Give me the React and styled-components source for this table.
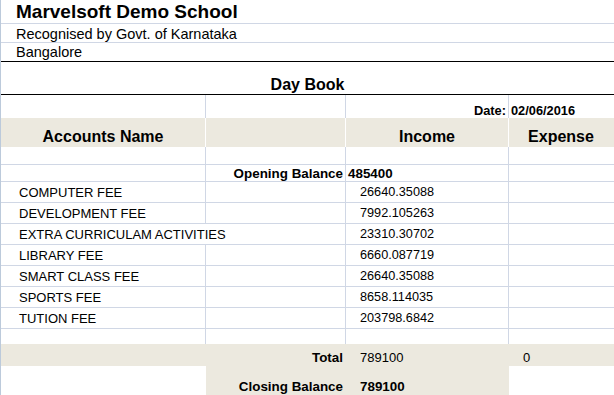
import React from 'react';
import styled, { createGlobalStyle } from 'styled-components';

const GRID = '#d0d7e5';
const BEIGE = '#ece9df';

const GlobalStyle = createGlobalStyle`
  * {
    box-sizing: border-box;
  }
  body {
    margin: 0;
    background: #fff;
    color: #000;
    font-family: "Liberation Sans", Arial, sans-serif;
  }
`;

const Sheet = styled.div`
  min-height: 100vh;
  border-left: 1px solid #bccadb;
  overflow: hidden;
`;

// school name / address lines above the report
const BannerRow = styled.div`
  height: ${(p) => p.$h}px;
  display: flex;
  align-items: flex-end;
  padding: 0 0 ${(p) => p.$pb}px 15px;
  border-bottom: 1px solid ${(p) => (p.$dark ? '#000' : GRID)};
  font-size: ${(p) => p.$size}px;
  font-weight: ${(p) => (p.$bold ? 700 : 400)};
  line-height: 1;
  white-space: nowrap;
`;

const ReportTitle = styled.div`
  height: 33px;
  display: flex;
  align-items: flex-end;
  justify-content: center;
  padding-bottom: 1.5px;
  border-bottom: 1px solid #000;
  font-size: 16px;
  font-weight: 700;
  line-height: 1;
`;

const Row = styled.div`
  display: grid;
  grid-template-columns: 205px 140px 163px 1fr;
  height: ${(p) => p.$h}px;
  background: ${(p) => (p.$fill ? BEIGE : 'transparent')};
  border-bottom: ${(p) => (p.$rule ? `1px solid ${GRID}` : 'none')};
`;

const sepColor = {
  grid: GRID,
  white: '#fff',
  none: 'transparent',
};

const Cell = styled.div`
  display: flex;
  align-items: flex-end;
  justify-content: ${(p) => (p.$right ? 'flex-end' : p.$center ? 'center' : 'flex-start')};
  padding: 0 ${(p) => p.$pr || 0}px ${(p) => p.$pb || 0}px ${(p) => p.$pl || 0}px;
  border-right: 1px solid ${(p) => (p.$spill ? 'transparent' : sepColor[p.$sep || 'none'])};
  background: ${(p) => (p.$fill ? BEIGE : 'transparent')};
  font-size: ${(p) => p.$size || 12.7}px;
  font-weight: ${(p) => (p.$bold ? 700 : 400)};
  line-height: 1;
  white-space: nowrap;
  overflow: visible;
  position: relative;
  z-index: ${(p) => (p.$spill ? 1 : 0)};
`;

const incomes = [
  { name: 'COMPUTER FEE', amount: '26640.35088' },
  { name: 'DEVELOPMENT FEE', amount: '7992.105263' },
  { name: 'EXTRA CURRICULAM ACTIVITIES', amount: '23310.30702', long: true },
  { name: 'LIBRARY FEE', amount: '6660.087719' },
  { name: 'SMART CLASS FEE', amount: '26640.35088' },
  { name: 'SPORTS FEE', amount: '8658.114035' },
  { name: 'TUTION FEE', amount: '203798.6842' },
];

const BlankRow = ({ h, rule }) => (
  <Row $h={h} $rule={rule}>
    <Cell $sep="grid" />
    <Cell $sep="grid" />
    <Cell $sep="grid" />
    <Cell />
  </Row>
);

const App = () => {
  return (
    <>
      <GlobalStyle />
      <Sheet>
        <BannerRow $h={24} $pb={1.8} $size={19} $bold>
          Marvelsoft Demo School
        </BannerRow>
        <BannerRow $h={19} $pb={1} $size={14.5}>
          Recognised by Govt. of Karnataka
        </BannerRow>
        <BannerRow $h={19} $pb={1.5} $size={14.5} $dark>
          Bangalore
        </BannerRow>
        <ReportTitle>Day Book</ReportTitle>

        <Row $h={23}>
          <Cell $sep="grid" />
          <Cell $sep="grid" />
          <Cell $sep="grid" $right $pr={2} $size={12.8} $bold>
            Date:
          </Cell>
          <Cell $pl={2} $size={12.8} $bold>
            02/06/2016
          </Cell>
        </Row>

        <Row $h={29} $fill>
          <Cell $sep="white" $center $pb={2} $size={16} $bold>
            Accounts Name
          </Cell>
          <Cell $sep="white" />
          <Cell $sep="white" $center $pb={2} $size={16} $bold>
            Income
          </Cell>
          <Cell $center $pb={2} $size={16} $bold>
            Expense
          </Cell>
        </Row>

        <BlankRow h={18} rule />

        <Row $h={17} $rule>
          <Cell $sep="grid" />
          <Cell $sep="grid" $right $pr={2} $pb={1} $size={13.4} $bold>
            Opening Balance
          </Cell>
          <Cell $sep="grid" $pl={2} $pb={1} $size={13.4} $bold>
            485400
          </Cell>
          <Cell />
        </Row>

        {incomes.map((item) => (
          <Row key={item.name} $h={21} $rule>
            <Cell $sep="grid" $spill={item.long} $pl={18} $pb={3} $size={13}>
              {item.name}
            </Cell>
            <Cell $sep="grid" />
            <Cell $sep="grid" $pl={14} $pb={3}>
              {item.amount}
            </Cell>
            <Cell />
          </Row>
        ))}

        <BlankRow h={15} />

        <Row $h={22} $fill>
          <Cell />
          <Cell $right $pr={2} $pb={2} $size={13.4} $bold>
            Total
          </Cell>
          <Cell $pl={14} $pb={2} $size={13}>
            789100
          </Cell>
          <Cell $pl={14} $pb={2} $size={13}>
            0
          </Cell>
        </Row>

        <Row $h={30}>
          <Cell />
          <Cell $fill $right $pr={2} $pb={2.3} $size={13.4} $bold>
            Closing Balance
          </Cell>
          <Cell $fill $pl={14} $pb={2.3} $size={13.4} $bold>
            789100
          </Cell>
          <Cell />
        </Row>
      </Sheet>
    </>
  );
};

export default App;
